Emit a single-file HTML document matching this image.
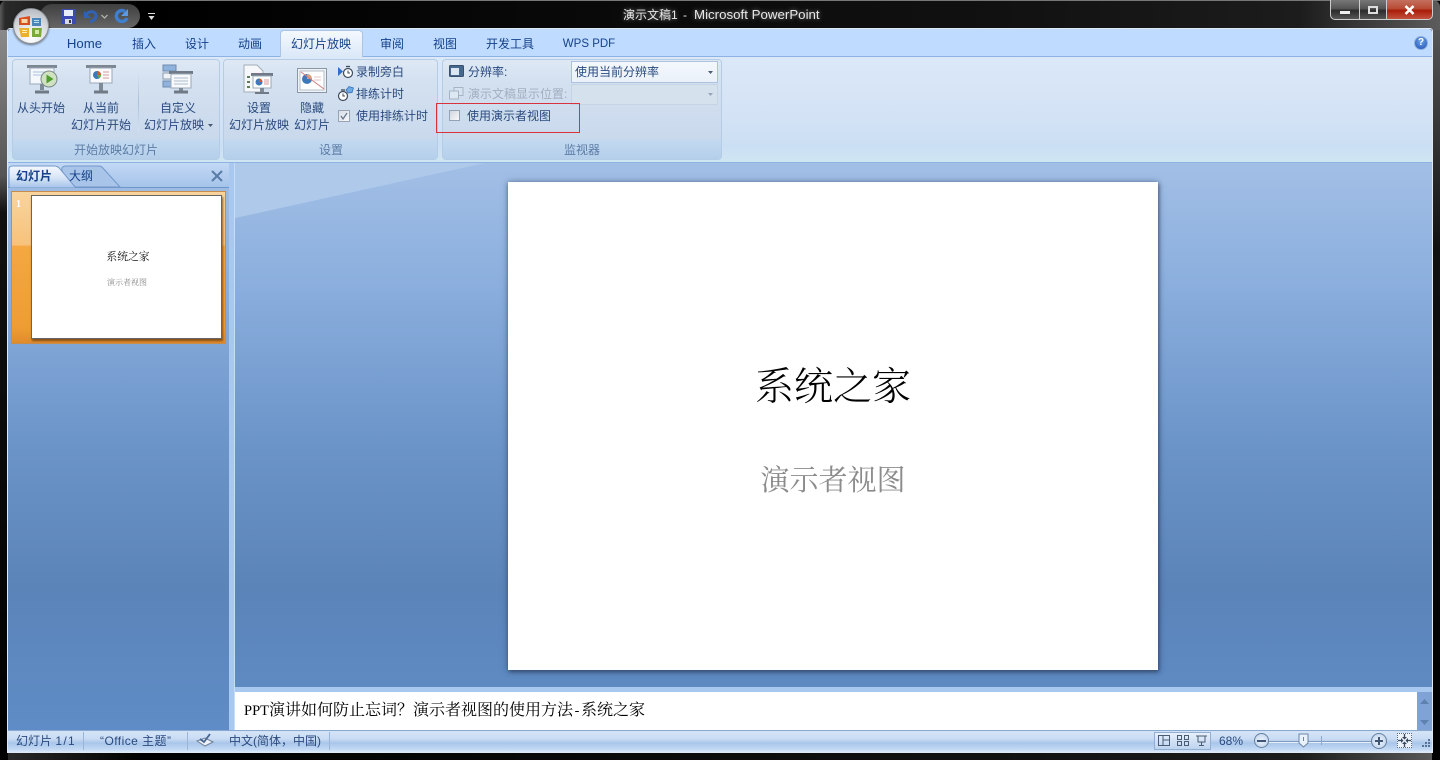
<!DOCTYPE html>
<html lang="zh"><head><meta charset="utf-8"><title>演示文稿1 - Microsoft PowerPoint</title>
<style>
html,body{margin:0;padding:0;width:1440px;height:760px;overflow:hidden;background:#000}
*{box-sizing:border-box}
#w{position:relative;width:1440px;height:760px;overflow:hidden;font-family:"Liberation Sans","Noto Sans CJK SC",sans-serif;font-size:12px;color:#15428b}
.a{position:absolute}
.t{position:absolute;white-space:nowrap;line-height:16px;height:16px;transform:translateX(-50%);color:#2a4a7f}
.l{position:absolute;white-space:nowrap;line-height:16px;height:16px;color:#2a4a7f}
.g{position:absolute;top:59px;height:101px;border:1px solid #b4cce6;border-radius:4px;background:linear-gradient(#dfe9f5 0,#d4e1f0 20%,#c9d9ec 80%);overflow:hidden}
.g i{position:absolute;left:0;right:0;bottom:0;height:19px;background:linear-gradient(#c2d9f0,#b5cfeb);display:block}
.gl{color:#5c7ca6}
.ic{position:absolute;overflow:visible}
</style></head><body><div id="w">

<!-- frame -->
<div class="a" style="left:0;top:0;width:1440px;height:760px;background:linear-gradient(90deg,#5a5a5a 0,#2a2a2a 5px,#000 140px,#111 1000px,#1c1c1c 1300px,#5c5c5c 1440px);border-radius:7px 7px 0 0"></div>
<div class="a" style="left:0;top:30px;width:8px;height:730px;background:linear-gradient(#8a8a8a 0,#555 20%,#111 25%,#000 100%)"></div>
<div class="a" style="left:1432px;top:30px;width:8px;height:730px;background:linear-gradient(#555,#111 30%,#000)"></div>
<div class="a" style="left:0;top:0;width:1440px;height:1px;background:#777"></div>
<div class="a" style="left:7px;top:28px;width:1426px;height:725px;border:1px solid #dfe8f5;border-radius:3px 3px 0 0"></div>

<!-- title -->
<div class="l" style="left:623px;top:7px;color:#e8e8e8;text-shadow:0 0 5px #888">演示文稿1</div>
<div class="l" style="left:683px;top:7px;color:#e8e8e8">-</div>
<div class="l" style="left:694px;top:7px;color:#e8e8e8;font-size:13.300px;text-shadow:0 0 5px #888">Microsoft PowerPoint</div>

<!-- window buttons -->
<div class="a" style="left:1330px;top:0;width:29px;height:20px;background:linear-gradient(#777 0,#555 45%,#2b2b2b 55%,#555);border:1px solid #ccc;border-top:0;border-right:0;border-radius:0 0 0 5px"></div>
<div class="a" style="left:1359px;top:0;width:27px;height:20px;background:linear-gradient(#777 0,#555 45%,#2b2b2b 55%,#555);border:1px solid #ccc;border-top:0;border-right:0"></div>
<div class="a" style="left:1386px;top:0;width:47px;height:20px;background:linear-gradient(#c4705e 0,#b84c36 45%,#a91c08 55%,#c4523e);border:1px solid #ccc;border-top:0;border-radius:0 0 5px 0"></div>
<div class="a" style="left:1340px;top:11px;width:10px;height:3px;background:#eee"></div>
<div class="a" style="left:1368px;top:6px;width:10px;height:8px;border:2px solid #ddd"></div>
<svg class="ic" style="left:1404px;top:5px" width="11" height="10"><path d="M1.500 1 9.500 9M9.500 1 1.500 9" stroke="#fff" stroke-width="2.600"/></svg>

<!-- tab strip & ribbon -->
<div class="a" style="left:8px;top:29px;width:1424px;height:134px;background:#bfdbff;border-bottom:1px solid #8db2e3;border-radius:3px 3px 0 0"></div>
<div class="a" style="left:8px;top:56px;width:1424px;height:106px;background:linear-gradient(#dbe8f8 0,#d3e2f5 60%,#cbdff4 85%,#cfe6f2 100%);border-top:1px solid #8db2e3"></div>
<div class="a" style="left:280px;top:30px;width:83px;height:27px;background:linear-gradient(#f5f9fe,#dbe8f8);border:1px solid #a9c4e4;border-bottom:0;border-radius:4px 4px 0 0"></div>
<div class="t" style="left:84.500px;top:36px;font-size:13.200px;color:#15428b">Home</div>
<div class="t" style="left:144px;top:36px;color:#15428b">插入</div>
<div class="t" style="left:197px;top:36px;color:#15428b">设计</div>
<div class="t" style="left:250px;top:36px;color:#15428b">动画</div>
<div class="t" style="left:321px;top:36px;color:#15428b">幻灯片放映</div>
<div class="t" style="left:392px;top:36px;color:#15428b">审阅</div>
<div class="t" style="left:445px;top:36px;color:#15428b">视图</div>
<div class="t" style="left:510px;top:36px;color:#15428b">开发工具</div>
<div class="t" style="left:589px;top:36px;font-size:11.500px;color:#15428b">WPS PDF</div>
<div class="a" style="left:1414px;top:36px;width:14px;height:14px;border-radius:50%;background:radial-gradient(circle at 50% 35%,#6fa5ea,#1d4eb0);border:1px solid #8fb0de;color:#fff;font:bold 10px/12px 'Liberation Sans',sans-serif;text-align:center">?</div>

<!-- QAT -->
<div class="a" style="left:40px;top:4px;width:100px;height:24px;border-radius:12px;background:linear-gradient(#3f3f3f,#666)"></div>
<svg class="ic" style="left:61px;top:9px" width="15" height="15" viewBox="0 0 15 15"><rect width="15" height="15" rx="1" fill="#3d4bb0"/><rect x="3" y="1" width="9" height="6" fill="#e9eefb"/><rect x="4" y="10" width="7" height="5" fill="#d5d8e6"/><rect x="8" y="11" width="2" height="3" fill="#334"/></svg>
<svg class="ic" style="left:83px;top:9px" width="16" height="15" viewBox="0 0 16 15"><path d="M3 6C6 1 13 2 13 7c0 3-3 5-6 6" fill="none" stroke="#2f63b5" stroke-width="3"/><path d="M1 2v7h7z" fill="#2f63b5"/></svg>
<svg class="ic" style="left:101px;top:14px" width="7" height="5"><path d="M.5 1 3.500 4 6.500 1" fill="none" stroke="#bbb" stroke-width="1.200"/></svg>
<svg class="ic" style="left:114px;top:8px" width="16" height="16" viewBox="0 0 16 16"><path d="M11 3.500A5.500 5.500 0 1 0 13 10" fill="none" stroke="#3f7fd0" stroke-width="3.500"/><path d="M14 1v7H7z" fill="#5b9be6"/></svg>
<svg class="ic" style="left:148px;top:13px" width="7" height="8"><path d="M0 .5h7" stroke="#ddd"/><path d="M.5 3h6L3.500 7z" fill="#ddd"/></svg>

<!-- office button -->
<div class="a" style="left:13px;top:8px;width:36px;height:36px;border-radius:50%;background:radial-gradient(circle at 50% 85%,#fff 0,#e3e6ea 40%,#b9bdc3 85%,#8d9096 100%);border:1px solid #8a8d92;box-shadow:0 1px 2px rgba(0,0,0,.5)"></div>
<svg class="ic" style="left:18px;top:15px" width="25" height="24" viewBox="0 0 25 24"><path d="M1 3 12 1v9H1z" fill="#d9501e"/><path d="M3.500 4h6v4h-6z" fill="#f6d7a6"/><path d="M14 3h9v8h-9z" fill="#4a86b8"/><path d="M16 5h5v1h-5zM16 7h5v1h-5z" fill="#bfe0ee"/><path d="M1 13h10v9H3z" fill="#ecb12c"/><path d="M4 15h5v1H4zM4 17h5v1H4z" fill="#fdf0b7"/><path d="M14 13h10l-1 9H14z" fill="#7ba93a"/><path d="M17 15h4v4h-4z" fill="#d6e8a7"/></svg>

<!-- groups -->
<div class="g" style="left:12px;width:208px"><i></i></div>
<div class="g" style="left:223px;width:215px"><i></i></div>
<div class="g" style="left:442px;width:280px"><i></i></div>
<div class="t gl" style="left:116px;top:142px">开始放映幻灯片</div>
<div class="t gl" style="left:331px;top:142px">设置</div>
<div class="t gl" style="left:582px;top:142px">监视器</div>
<div class="a" style="left:138px;top:72px;width:1px;height:60px;background:linear-gradient(#d7e3f2,#a9bfd9,#d7e3f2)"></div>

<!-- icon 1 -->
<svg class="ic" style="left:26px;top:64px" width="32" height="32" viewBox="0 0 32 32"><rect x="1" y="1" width="30" height="3" fill="#7d8792"/><rect x="4" y="4" width="24" height="16" fill="#f4f7fb" stroke="#9aa8b8"/><path d="M7 8h12M7 11h9" stroke="#a9c2de"/><rect x="14" y="20" width="4" height="6" fill="#7e8a96"/><path d="M9 28h14" stroke="#6f7a86" stroke-width="3"/><circle cx="23" cy="15" r="8" fill="#cfe3c0" stroke="#7b8a8a"/><path d="M20.500 10.500v9l7-4.500z" fill="#4f9d2e"/></svg>
<!-- icon 2 -->
<svg class="ic" style="left:85px;top:64px" width="32" height="32" viewBox="0 0 32 32"><rect x="1" y="1" width="30" height="3" fill="#7d8792"/><rect x="5" y="4" width="22" height="15" fill="#f8fafd" stroke="#9aa8b8"/><circle cx="12" cy="11" r="4" fill="#3f78b9"/><path d="M12 11V7a4 4 0 0 1 4 4z" fill="#d8562c"/><path d="M12 11h4a4 4 0 0 1-2 3.500z" fill="#6aa84f"/><path d="M18 8h6M18 11h6M18 14h6" stroke="#d99a9a"/><rect x="14" y="19" width="4" height="8" fill="#7e8a96"/><path d="M9 28h14" stroke="#6f7a86" stroke-width="3"/></svg>
<!-- icon 3 -->
<svg class="ic" style="left:162px;top:64px" width="32" height="32" viewBox="0 0 32 32"><rect x="1" y="1" width="13" height="6" fill="#8fb3dc" stroke="#6f8bb0"/><rect x="1" y="9" width="8" height="6" fill="#f0f3f7" stroke="#8a9aab"/><rect x="1" y="17" width="8" height="6" fill="#8fb3dc" stroke="#6f8bb0"/><rect x="7" y="7" width="24" height="3" fill="#6f7a86"/><rect x="9" y="10" width="20" height="14" fill="#f7f9fc" stroke="#9aa8b8"/><path d="M12 14h14M12 17h14M12 20h14" stroke="#aebccb"/><rect x="17" y="24" width="4" height="3" fill="#7e8a96"/><path d="M12 28h14" stroke="#6f7a86" stroke-width="3"/></svg>
<!-- icon 4 -->
<svg class="ic" style="left:243px;top:64px" width="32" height="32" viewBox="0 0 32 32"><path d="M1 1h13l6 6v21H1z" fill="#f5f7fb" stroke="#a3adb9"/><path d="M4 13h3M4 18h3M4 23h3" stroke="#5e7f55" stroke-width="2"/><rect x="8" y="9" width="22" height="3" fill="#6f7a86"/><rect x="10" y="12" width="18" height="12" fill="#fff" stroke="#9aa8b8"/><circle cx="16" cy="18" r="3.500" fill="#3f78b9"/><path d="M16 18v-3.500a3.500 3.500 0 0 1 3.500 3.500z" fill="#d8562c"/><path d="M21 16h5M21 18h5M21 20h5" stroke="#d99a9a"/><rect x="17" y="24" width="4" height="4" fill="#7e8a96"/><path d="M12 29h14" stroke="#6f7a86" stroke-width="2"/></svg>
<!-- icon 5 -->
<svg class="ic" style="left:297px;top:68px" width="30" height="25" viewBox="0 0 30 25"><rect x=".5" y=".5" width="29" height="24" fill="#eef2f7" stroke="#8b97a5"/><rect x="3" y="3" width="24" height="19" fill="#fff" stroke="#b6bfc9"/><circle cx="10" cy="11" r="5" fill="#3f78b9"/><path d="M10 11V6a5 5 0 0 1 5 5z" fill="#d8a07c"/><path d="M4 4 27 21" stroke="#d77d7d"/><path d="M17 9h7M17 12h7" stroke="#e3c3c3"/></svg>
<!-- small icons -->
<svg class="ic" style="left:338px;top:64px" width="16" height="16" viewBox="0 0 16 16"><path d="M0 3v9l5-4.500z" fill="#2f6fca"/><circle cx="10" cy="9" r="4.500" fill="#fff" stroke="#3c4a5c" stroke-width="1.200"/><path d="M10 6.500V9h2" stroke="#3c4a5c" fill="none"/><path d="M8 2.500h4" stroke="#3c4a5c" stroke-width="1.300"/></svg>
<svg class="ic" style="left:337px;top:86px" width="17" height="16" viewBox="0 0 17 16"><circle cx="6" cy="10" r="4.500" fill="#fff" stroke="#3c4a5c" stroke-width="1.200"/><path d="M6 7.500V10h2" stroke="#3c4a5c" fill="none"/><path d="M4 4h4" stroke="#3c4a5c" stroke-width="1.300"/><path d="M9 4 12 .5 16.500 2 15 6.500 11 7z" fill="#6fa9e6" stroke="#2e6cb3" stroke-width=".7"/></svg>
<div class="a" style="left:338px;top:110px;width:12px;height:12px;background:linear-gradient(135deg,#d8dde4,#f7f8fa);border:1px solid #98a4b3"></div>
<svg class="ic" style="left:339px;top:111px" width="10" height="10"><path d="M2 5 4 8 8 2" fill="none" stroke="#66778e" stroke-width="1.300"/></svg>
<svg class="ic" style="left:449px;top:65px" width="15" height="13" viewBox="0 0 15 13"><rect x=".5" y=".5" width="14" height="11" rx="1" fill="#45688f" stroke="#3a506c"/><rect x="2" y="3" width="8" height="7" fill="#dbe6f3"/></svg>
<svg class="ic" style="left:449px;top:87px;opacity:.45" width="15" height="13" viewBox="0 0 15 13"><rect x="5" y=".5" width="9" height="8" fill="#dbe6f3" stroke="#6f7f90"/><rect x=".5" y="4" width="9" height="8" fill="#eef3f8" stroke="#6f7f90"/></svg>

<!-- ribbon text -->
<div class="t" style="left:41px;top:100px">从头开始</div>
<div class="t" style="left:101px;top:100px">从当前</div>
<div class="t" style="left:101px;top:117px">幻灯片开始</div>
<div class="t" style="left:178px;top:100px">自定义</div>
<div class="l" style="left:144px;top:117px">幻灯片放映</div>
<svg class="ic" style="left:208px;top:124px" width="5" height="3"><path d="M0 0h5L2.500 3z" fill="#4a5c74"/></svg>
<div class="t" style="left:259px;top:100px">设置</div>
<div class="t" style="left:259px;top:117px">幻灯片放映</div>
<div class="t" style="left:312px;top:100px">隐藏</div>
<div class="t" style="left:312px;top:117px">幻灯片</div>
<div class="l" style="left:356px;top:64px">录制旁白</div>
<div class="l" style="left:356px;top:86px">排练计时</div>
<div class="l" style="left:356px;top:108px">使用排练计时</div>
<div class="l" style="left:468px;top:64px">分辨率:</div>
<div class="l" style="left:468px;top:86px;color:#a0aebf">演示文稿显示位置:</div>
<div class="a" style="left:571px;top:61px;width:147px;height:22px;background:linear-gradient(#f4f8fd,#eaf1f9);border:1px solid #abc1de"></div>
<div class="l" style="left:575px;top:64px">使用当前分辨率</div>
<svg class="ic" style="left:708px;top:71px" width="5" height="3"><path d="M0 0h5L2.500 3z" fill="#4a5c74"/></svg>
<div class="a" style="left:571px;top:84px;width:147px;height:21px;background:#d6e1ee;border:1px solid #c5d3e5"></div>
<svg class="ic" style="left:708px;top:93px" width="5" height="3"><path d="M0 0h5L2.500 3z" fill="#98a6b8"/></svg>
<div class="a" style="left:449px;top:110px;width:11px;height:11px;background:linear-gradient(135deg,#d0d6de,#f7f8fa);border:1px solid #93a2b4"></div>
<div class="l" style="left:467px;top:108px">使用演示者视图</div>
<div class="a" style="left:436px;top:103px;width:144px;height:30px;border:1px solid #d8323c"></div>

<!-- workspace -->
<div class="a" style="left:8px;top:163px;width:1424px;height:567px;background:linear-gradient(#a2bfe6 0,#8aaedd 22%,#6b94c8 50%,#5b84b9 75%,#5f8cc6 100%)"></div>
<div class="a" style="left:229px;top:163px;width:6px;height:567px;background:#a8c8f0;border-right:1px solid #c6dcf7"></div>
<svg class="a" style="left:235px;top:163px" width="250" height="55"><path d="M0 0H250L0 55z" fill="#afc9ea"/></svg>

<!-- left pane tabs -->
<div class="a" style="left:8px;top:163px;width:221px;height:25px;background:linear-gradient(#c3d9f5,#a5c3ea);border-bottom:1px solid #6e96c9"></div>
<svg class="a" style="left:8px;top:165px" width="115" height="23"><defs><linearGradient id="tb" x1="0" y1="0" x2="0" y2="1"><stop offset="0" stop-color="#f4f8fe"/><stop offset=".5" stop-color="#dbe7f7"/><stop offset="1" stop-color="#a5c3ea"/></linearGradient></defs><path d="M62 22H112L94 2Q93 1 90 1H58Q53 1 54 6z" fill="#a8c4e9" stroke="#7398c9"/><path d="M1 23V4Q1 1 5 1H46Q50 1 52 4L68 23z" fill="url(#tb)" stroke="#7398c9"/></svg>
<div class="l" style="left:16px;top:168px;color:#15428b;font-weight:bold">幻灯片</div>
<div class="l" style="left:69px;top:168px;color:#15428b">大纲</div>
<svg class="ic" style="left:211px;top:170px" width="12" height="12"><path d="M1 1 11 11M11 1 1 11" stroke="#5a7ea8" stroke-width="2.200"/></svg>

<!-- thumbnail -->
<div class="a" style="left:11px;top:191px;width:215px;height:153px;background:linear-gradient(#f9d49c 0,#f8c27a 35%,#f5a742 36%,#ef9c35 90%,#e08b2c 100%);border:1px solid #c98d4b"></div>
<div class="a" style="left:31px;top:195px;width:191px;height:144px;background:#fff;border:1px solid #666;box-shadow:1px 2px 2px rgba(90,50,10,.7)"></div>
<div class="l" style="left:16px;top:198px;color:#fff;font:bold 10px/14px 'Liberation Serif',serif">1</div>
<div class="t" style="left:128px;top:249px;font-family:'Liberation Serif','Noto Serif CJK SC',serif;font-size:10.800px;color:#111">系统之家</div>
<div class="t" style="left:127px;top:275px;font-family:'Liberation Serif','Noto Serif CJK SC',serif;font-size:8px;color:#888">演示者视图</div>

<!-- slide -->
<div class="a" style="left:508px;top:182px;width:650px;height:488px;background:#fff;box-shadow:0 0 6px rgba(40,60,90,.5),1px 2px 4px rgba(20,30,50,.5)"></div>
<div class="a" style="left:508px;top:362px;width:650px;height:52px;line-height:52px;text-align:center;font-family:'Liberation Serif','Noto Serif CJK SC',serif;font-size:39px;font-weight:300;color:#000">系统之家</div>
<div class="a" style="left:508px;top:461px;width:650px;height:40px;line-height:40px;text-align:center;font-family:'Liberation Serif','Noto Serif CJK SC',serif;font-size:29px;color:#8b8b8b">演示者视图</div>

<!-- notes -->
<div class="a" style="left:235px;top:687px;width:1197px;height:6px;background:#a8c8f0"></div>
<div class="a" style="left:235px;top:692px;width:1182px;height:38px;background:#fff"></div>
<div class="l" style="left:244px;top:700px;height:18px;line-height:18px;font-family:'Noto Serif CJK SC',serif;font-size:16px;color:#000"><span style="font-family:'Liberation Serif',serif;font-size:14.500px">PPT</span>演讲如何防止忘词？演示者视图的使用方法<span style="font-family:'Liberation Mono',monospace;font-size:13.300px">-</span>系统之家</div>
<div class="a" style="left:1417px;top:692px;width:15px;height:38px;background:#7ea3d4"></div>
<svg class="ic" style="left:1419px;top:698px" width="11" height="28"><path d="M1 6h9L5.500 1zM1 22h9l-4.500 5z" fill="#5f81b0"/></svg>

<!-- status bar -->
<div class="a" style="left:8px;top:730px;width:1424px;height:22px;background:linear-gradient(#5c84b8 0,#d6e5f8 6%,#c9dcf4 40%,#a9c6ea 60%,#c5dbf5 90%,#dce9fa 100%)"></div>
<div class="l" style="left:16px;top:733px">幻灯片 <span style="letter-spacing:1.300px">1/1</span></div>
<div class="a" style="left:83px;top:732px;width:1px;height:18px;background:#9ab5d7"></div>
<div class="l" style="left:100px;top:733px;letter-spacing:.45px">“Office 主题”</div>
<div class="a" style="left:187px;top:732px;width:1px;height:18px;background:#9ab5d7"></div>
<svg class="ic" style="left:196px;top:732px" width="18" height="17" viewBox="0 0 18 17"><path d="M1 9 9 14l8-4-8-4z" fill="#eef2f8" stroke="#6d7f98"/><path d="M4 7 8 10 14 2" fill="none" stroke="#45648e" stroke-width="1.800"/></svg>
<div class="l" style="left:229px;top:733px;font-family:'Liberation Sans','Noto Sans CJK TC',sans-serif">中文(简体，中国)</div>
<div class="a" style="left:329px;top:732px;width:1px;height:18px;background:#9ab5d7"></div>
<div class="a" style="left:1154px;top:732px;width:57px;height:18px;background:linear-gradient(#e7f0fb,#bcd3ef);border:1px solid #93afd3"></div>
<svg class="ic" style="left:1158px;top:735px" width="52" height="12"><g fill="none" stroke="#4a5c74"><rect x=".5" y=".5" width="11" height="10"/><path d="M5 .5v10M5 5h6"/><rect x="19.500" y=".5" width="4" height="4"/><rect x="26.500" y=".5" width="4" height="4"/><rect x="19.500" y="6.500" width="4" height="4"/><rect x="26.500" y="6.500" width="4" height="4"/><path d="M38 1h11M40 1v6h7V1M43.500 7v3M41 10.500h5"/></g></svg>
<div class="l" style="left:1219px;top:733px;color:#2a4a7f">68%</div>
<div class="a" style="left:1269px;top:741px;width:103px;height:1px;background:#7f9bbf;box-shadow:0 1px 0 #e8f0fa"></div>
<div class="a" style="left:1321px;top:736px;width:1px;height:9px;background:#8ba7ca"></div>
<div class="a" style="left:1254px;top:733px;width:15px;height:15px;border-radius:50%;background:radial-gradient(#eef4fc,#b9cfea);border:1px solid #66809f"></div>
<div class="a" style="left:1257px;top:740px;width:9px;height:2px;background:#3f5675"></div>
<div class="a" style="left:1371px;top:733px;width:16px;height:16px;border-radius:50%;background:radial-gradient(#eef4fc,#b9cfea);border:1px solid #66809f"></div>
<div class="a" style="left:1375px;top:740px;width:8px;height:2px;background:#3f5675"></div>
<div class="a" style="left:1378px;top:737px;width:2px;height:8px;background:#3f5675"></div>
<svg class="ic" style="left:1298px;top:733px" width="11" height="15"><path d="M1 1h9v9l-4.500 4L1 10z" fill="#e9f1fb" stroke="#6d86a7"/><path d="M5.500 4v4" stroke="#6d86a7"/></svg>
<div class="a" style="left:1397px;top:733px;width:15px;height:15px;background:#edf3fb;border:1px dotted #5a6b80"></div>
<svg class="ic" style="left:1398px;top:734px" width="13" height="13"><path d="M6.500 0v3M6.500 10v3M0 6.500h3M10 6.500h3" stroke="#38485e" stroke-width="1.300"/><path d="M4 3h5L6.500 5.500zM4 10h5L6.500 7.500zM3 4v5L5.500 6.500zM10 4v5L7.500 6.500z" fill="#38485e"/></svg>
<svg class="ic" style="left:1421px;top:738px" width="10" height="10"><g fill="#5a7499"><rect x="7" y="1" width="2" height="2"/><rect x="4" y="4" width="2" height="2"/><rect x="7" y="4" width="2" height="2"/><rect x="1" y="7" width="2" height="2"/><rect x="4" y="7" width="2" height="2"/><rect x="7" y="7" width="2" height="2"/></g></svg>

</div></body></html>
